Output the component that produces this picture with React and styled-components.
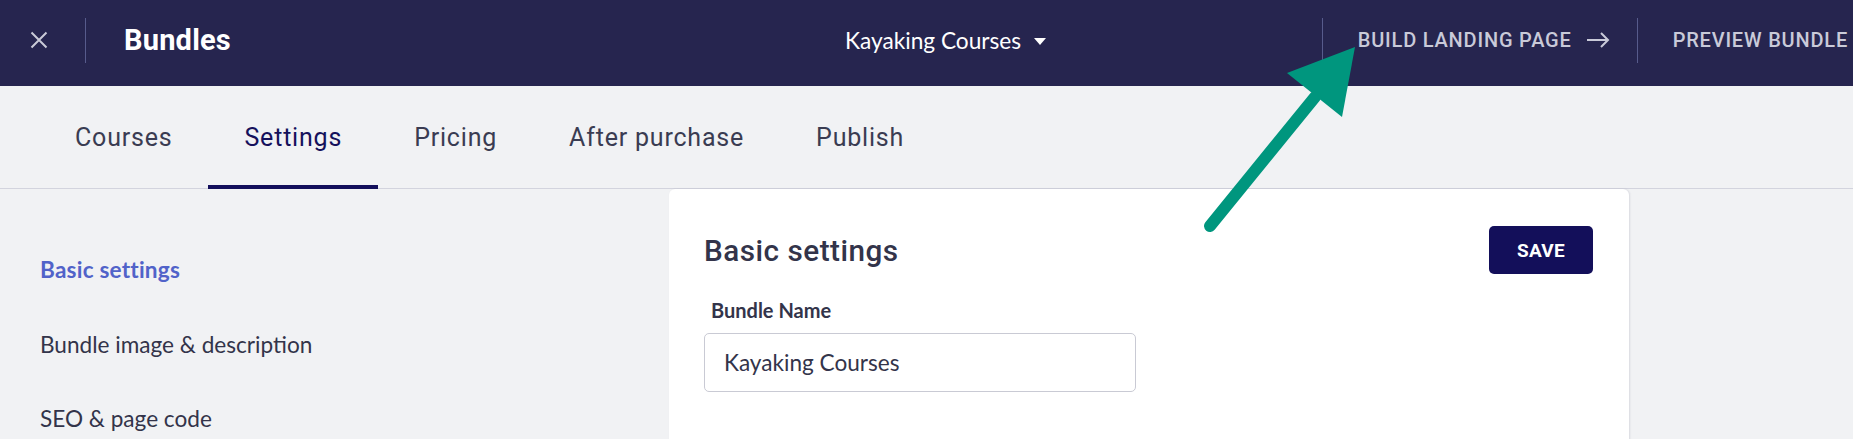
import React from 'react'
import styled, { createGlobalStyle } from 'styled-components'

const GlobalStyle = createGlobalStyle`
  html, body {
    margin: 0;
    padding: 0;
    background: #f1f2f4;
    font-family: Roboto, "Liberation Sans", sans-serif;
  }
  * { box-sizing: border-box; }
`

const Page = styled.div`
  position: relative;
  width: 1853px;
  height: 439px;
  overflow: hidden;
  background: #f1f2f4;
`

const Header = styled.header`
  display: flex;
  align-items: center;
  height: 86px;
  padding-bottom: 6px;
  background: #26254f;
  color: #fff;
`

const CloseButton = styled.button`
  display: flex;
  align-items: center;
  justify-content: center;
  width: 18px;
  height: 18px;
  margin-left: 30px;
  padding: 0;
  border: 0;
  background: none;
  color: #c9cad8;
  cursor: pointer;
`

const Divider = styled.span`
  display: block;
  width: 1px;
  height: 45px;
  background: #575b8c;
  margin: ${p => p.$margin || '0'};
`

const Title = styled.h1`
  margin: 0;
  font-family: Roboto, sans-serif;
  font-weight: 700;
  font-size: 29px;
  letter-spacing: 0.2px;
  color: #fff;
`

const BundlePicker = styled.button`
  display: flex;
  align-items: center;
  gap: 13px;
  margin-left: 614px;
  padding: 0;
  border: 0;
  background: none;
  color: #fff;
  font-family: Lato, sans-serif;
  font-size: 22.7px;
  cursor: pointer;
`

const Caret = styled.span`
  width: 0;
  height: 0;
  border-left: 6.5px solid transparent;
  border-right: 6.5px solid transparent;
  border-top: 7px solid #fff;
  margin-top: 2px;
`

const HeaderActions = styled.div`
  display: flex;
  align-items: center;
  margin-left: auto;
`

const NavAction = styled.button`
  display: flex;
  align-items: center;
  gap: 14px;
  padding: ${p => p.$last ? '0 5px 0 35px' : '0 27px 0 35px'};
  border: 0;
  background: none;
  color: #c9cad9;
  font-family: Roboto, sans-serif;
  font-weight: 500;
  font-size: 20px;
  letter-spacing: 0.8px;
  text-transform: uppercase;
  white-space: nowrap;
  cursor: pointer;
`

const TabBar = styled.nav`
  display: flex;
  height: 103px;
  padding-left: 39px;
  border-bottom: 1px solid #d3d4de;
`

const Tab = styled.a`
  display: flex;
  align-items: center;
  padding: 4px 36px 0;
  margin-bottom: -1px;
  border-bottom: 4px solid ${p => p.$active ? '#130f5b' : 'transparent'};
  color: ${p => p.$active ? '#15115c' : '#3a3c52'};
  font-family: Roboto, sans-serif;
  font-size: 25px;
  letter-spacing: 0.8px;
  text-decoration: none;
  cursor: pointer;
`

const Body = styled.div`
  display: flex;
  align-items: flex-start;
`

const SideNav = styled.aside`
  display: flex;
  flex-direction: column;
  gap: 44.5px;
  width: 669px;
  padding: 66px 0 0 40px;
`

const SideLink = styled.a`
  line-height: 30px;
  font-family: Lato, sans-serif;
  font-size: 22.6px;
  font-weight: ${p => p.$active ? 700 : 400};
  letter-spacing: ${p => p.$active ? '0.2px' : '0'};
  color: ${p => p.$active ? '#5163c9' : '#33344a'};
  text-decoration: none;
  cursor: pointer;
`

const Card = styled.section`
  width: 960px;
  height: 260px;
  padding: 37px 36px 0 35px;
  background: #fff;
  border-radius: 6px 6px 0 0;
  box-shadow: 1px 0 2px rgba(40, 44, 70, 0.12);
`

const CardHead = styled.div`
  display: flex;
  align-items: center;
  justify-content: space-between;
  height: 48px;
`

const CardTitle = styled.h2`
  margin: 0;
  font-family: Roboto, sans-serif;
  font-weight: 500;
  font-size: 29.7px;
  letter-spacing: 0.5px;
  color: #33344a;
`

const SaveButton = styled.button`
  width: 104px;
  height: 48px;
  border: 0;
  border-radius: 5px;
  background: #130f5a;
  color: #fff;
  font-family: Roboto, sans-serif;
  font-weight: 700;
  font-size: 19px;
  letter-spacing: 0.3px;
  cursor: pointer;
`

const Label = styled.label`
  display: block;
  margin: 25px 0 12px 7px;
  line-height: 22px;
  font-family: Lato, sans-serif;
  font-weight: 700;
  font-size: 20px;
  color: #33344a;
`

const TextInput = styled.input`
  display: block;
  width: 432px;
  height: 59px;
  padding: 0 19px;
  border: 1px solid #c9cad4;
  border-radius: 5px;
  background: #fff;
  font-family: Lato, sans-serif;
  font-size: 22.6px;
  color: #33344a;
  outline: none;
`

const Pointer = styled.svg`
  position: absolute;
  left: 1190px;
  top: 40px;
  pointer-events: none;
`

const CloseIcon = () => (
  <svg width="18" height="18" viewBox="0 0 18 18" fill="none">
    <path d="M1.5 1.5 16.5 16.5M16.5 1.5 1.5 16.5" stroke="currentColor" strokeWidth="2" />
  </svg>
)

const ArrowRight = () => (
  <svg width="24" height="16" viewBox="0 0 24 16" fill="none">
    <path d="M1 8h21M15 1l7 7-7 7" stroke="currentColor" strokeWidth="2" />
  </svg>
)

const tabs = ['Courses', 'Settings', 'Pricing', 'After purchase', 'Publish']
const sideLinks = ['Basic settings', 'Bundle image & description', 'SEO & page code']

export default function App() {
  return (
    <Page>
      <GlobalStyle />
      <Header>
        <CloseButton aria-label="Close"><CloseIcon /></CloseButton>
        <Divider $margin="0 38px 0 37px" />
        <Title>Bundles</Title>
        <BundlePicker>
          Kayaking Courses
          <Caret />
        </BundlePicker>
        <HeaderActions>
          <Divider />
          <NavAction>
            Build landing page
            <ArrowRight />
          </NavAction>
          <Divider />
          <NavAction $last>Preview bundle</NavAction>
        </HeaderActions>
      </Header>

      <TabBar>
        {tabs.map(t => (
          <Tab key={t} $active={t === 'Settings'}>{t}</Tab>
        ))}
      </TabBar>

      <Body>
        <SideNav>
          {sideLinks.map((l, i) => (
            <SideLink key={l} $active={i === 0}>{l}</SideLink>
          ))}
        </SideNav>
        <Card>
          <CardHead>
            <CardTitle>Basic settings</CardTitle>
            <SaveButton>SAVE</SaveButton>
          </CardHead>
          <Label htmlFor="bundle-name">Bundle Name</Label>
          <TextInput id="bundle-name" defaultValue="Kayaking Courses" />
        </Card>
      </Body>

      {/* annotation arrow drawn over the page */}
      <Pointer width="180" height="200" viewBox="0 0 180 200">
        <path d="M20 186 L125 57" stroke="#00967e" strokeWidth="12" strokeLinecap="round" />
        <polygon points="165,7 97,33 152,77" fill="#00967e" />
      </Pointer>
    </Page>
  )
}
